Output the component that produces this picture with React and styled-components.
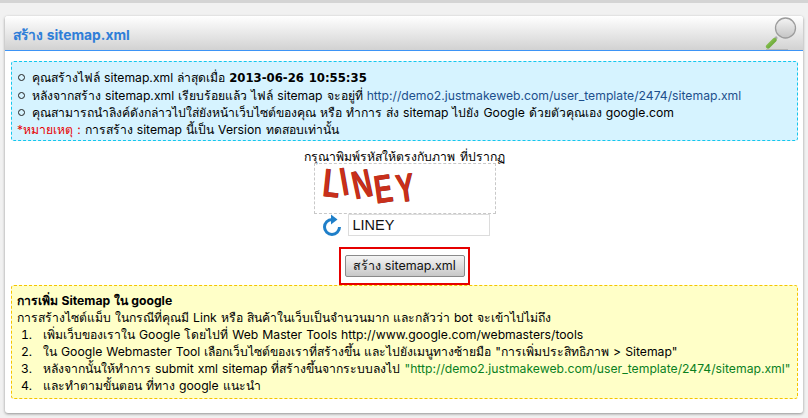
import styled, { createGlobalStyle } from "styled-components";

const GlobalStyle = createGlobalStyle`
  html, body {
    margin: 0;
    padding: 0;
    background: #f1f1f1;
  }
  body {
    font-family: Inter, "Noto Sans", "Liberation Sans", sans-serif;
    font-size: 12.2px;
    word-spacing: 0.6px;
    color: #000;
  }
`;

const captchaLetters = [
  { char: "L", tilt: 6, drop: 0, width: 17 },
  { char: "I", tilt: -10, drop: 0, width: 12 },
  { char: "N", tilt: -12, drop: 4, width: 22 },
  { char: "E", tilt: -8, drop: 8, width: 22 },
  { char: "Y", tilt: -8, drop: 7, width: 21 },
];

const MagnifierIcon = () => (
  <svg width="33" height="33" viewBox="0 0 33 33">
    <defs>
      <linearGradient id="glass" x1="0" y1="0" x2="0" y2="1">
        <stop offset="0" stopColor="#f4f4f4" />
        <stop offset="1" stopColor="#c4c4c4" />
      </linearGradient>
      <linearGradient id="handle" x1="0" y1="0" x2="1" y2="1">
        <stop offset="0" stopColor="#a6d86a" />
        <stop offset="1" stopColor="#4c8f1e" />
      </linearGradient>
    </defs>
    <path d="M2 32.500h22" stroke="#8a8a8a" strokeWidth="1" opacity="0.4" />
    <path d="M13 20l-2 2" stroke="#aaa" strokeWidth="2.500" />
    <path d="M2.500 31c-1-1-1-2 0-3l6.500-6.500c1-1 2-1 3 0s1 2 0 3L5.500 31c-1 1-2 1-3 0z" fill="url(#handle)" />
    <circle cx="21.500" cy="11" r="10" fill="url(#glass)" stroke="#9c9c9c" strokeWidth="1.300" />
  </svg>
);

const RefreshIcon = () => (
  <svg width="20" height="22" viewBox="0 0 20 22">
    <path d="M10 5.500a7.500 7.500 0 1 0 7.500 7.500" fill="none" stroke="#1f7fc9" strokeWidth="3" />
    <path d="M9 0.500l6.500 5-6.500 5z" fill="#1f7fc9" />
  </svg>
);

const App = () => {
  return (
    <>
      <GlobalStyle />
      <Page>
        <Panel>
          <PanelHeader>
            <PanelTitle>สร้าง sitemap.xml</PanelTitle>
            <MagnifierIcon />
          </PanelHeader>
          <PanelBody>
            <InfoBox>
              <InfoList>
                <li>
                  คุณสร้างไฟล์ sitemap.xml ล่าสุดเมื่อ <StampDate>2013-06-26 10:55:35</StampDate>
                </li>
                <li>
                  หลังจากสร้าง sitemap.xml เรียบร้อยแล้ว ไฟล์ sitemap จะอยู่ที่{" "}
                  <SiteLink>http://demo2.justmakeweb.com/user_template/2474/sitemap.xml</SiteLink>
                </li>
                <li>
                  คุณสามารถนำลิงค์ดังกล่าวไปใส่ยังหน้าเว็บไซต์ของคุณ หรือ ทำการ ส่ง sitemap ไปยัง Google
                  ด้วยตัวคุณเอง google.com
                </li>
              </InfoList>
              <div>
                <RedNote>*หมายเหตุ :</RedNote> การสร้าง sitemap นี้เป็น Version ทดสอบเท่านั้น
              </div>
            </InfoBox>

            <CaptchaForm>
              <CaptchaLabel>กรุณาพิมพ์รหัสให้ตรงกับภาพ ที่ปรากฏ</CaptchaLabel>
              <CaptchaImage>
                <CaptchaWord>
                  {captchaLetters.map((l) => (
                    <CaptchaLetter key={l.char} $tilt={l.tilt} $drop={l.drop} $width={l.width}>
                      {l.char}
                    </CaptchaLetter>
                  ))}
                </CaptchaWord>
              </CaptchaImage>
              <CaptchaRow>
                <RefreshIcon />
                <CaptchaInput defaultValue="LINEY" />
              </CaptchaRow>
              <ButtonFrame>
                <SubmitButton>สร้าง sitemap.xml</SubmitButton>
              </ButtonFrame>
            </CaptchaForm>

            <HelpBox>
              <b>การเพิ่ม Sitemap ใน google</b>
              <div>การสร้างไซต์แม็บ ในกรณีที่คุณมี Link หรือ สินค้าในเว็บเป็นจำนวนมาก และกลัวว่า bot จะเข้าไปไม่ถึง</div>
              <HelpSteps>
                <li>เพิ่มเว็บของเราใน Google โดยไปที่ Web Master Tools http://www.google.com/webmasters/tools</li>
                <li>ใน Google Webmaster Tool เลือกเว็บไซต์ของเราที่สร้างขึ้น และไปยังเมนูทางซ้ายมือ "การเพิ่มประสิทธิภาพ &gt; Sitemap"</li>
                <li>
                  หลังจากนั้นให้ทำการ submit xml sitemap ที่สร้างขึ้นจากระบบลงไป{" "}
                  <GreenLink>"http://demo2.justmakeweb.com/user_template/2474/sitemap.xml"</GreenLink>
                </li>
                <li>และทำตามขั้นตอน ที่ทาง google แนะนำ</li>
              </HelpSteps>
            </HelpBox>
          </PanelBody>
        </Panel>
      </Page>
    </>
  );
};

const Page = styled.div`
  width: 808px;
  height: 418px;
  box-sizing: border-box;
  padding: 13px 5px 5px;
  overflow: hidden;
  border-top: 3px solid #d4d4d4;
`;

const Panel = styled.div`
  height: 397px;
  box-sizing: border-box;
  background: #fff;
  border-radius: 3px;
  box-shadow: 0 1px 3px rgba(0, 0, 0, 0.4);
`;

const PanelHeader = styled.div`
  height: 34px;
  padding: 0 6px 0 8px;
  display: flex;
  align-items: flex-end;
  justify-content: space-between;
  background: linear-gradient(#ffffff, #d2d2d2);
  border-bottom: 1px solid #3d94f6;
  border-radius: 3px 3px 0 0;
`;

const PanelTitle = styled.h1`
  margin: 0 0 5px;
  font-size: 13.8px;
  line-height: 19px;
  font-weight: bold;
  color: #2f7ed8;
`;

const PanelBody = styled.div`
  padding: 10px 5px 0 6px;
`;

const InfoBox = styled.div`
  height: 80px;
  box-sizing: border-box;
  padding: 7px 5px;
  line-height: 17px;
  background: #d6f3ff;
  border: 1px dashed #14c7ee;
  border-radius: 3px;
`;

const InfoList = styled.ul`
  margin: 0;
  padding: 0 0 0 12px;
  list-style: none;

  li::before {
    content: "";
    display: inline-block;
    width: 5px;
    height: 5px;
    margin: 0 7px 1px -11px;
    border: 1px solid #222;
    border-radius: 50%;
  }
`;

const StampDate = styled.b`
  font-family: "DejaVu Sans", sans-serif;
  font-size: 11.7px;
`;

const SiteLink = styled.span`
  color: #1c4f8c;
`;

const RedNote = styled.span`
  color: #e60000;
`;

const CaptchaForm = styled.div`
  height: 144px;
  display: flex;
  flex-direction: column;
  align-items: center;
`;

const CaptchaLabel = styled.div`
  margin-top: 9px;
  line-height: 13px;
`;

const CaptchaImage = styled.div`
  width: 180px;
  height: 50px;
  margin-left: 1px;
  border: 1px dashed #c8c8c8;
`;

const CaptchaWord = styled.div`
  display: flex;
  margin-left: 8px;
`;

const CaptchaLetter = styled.span`
  display: block;
  width: ${(p) => p.$width}px;
  font-family: "Liberation Sans", sans-serif;
  font-weight: bold;
  font-size: 40px;
  line-height: 36px;
  color: #c8301c;
  text-shadow: 1px 0 0 #7a1608;
  transform-origin: left center;
  transform: translateY(${(p) => p.$drop}px) rotate(${(p) => p.$tilt}deg) scaleX(0.68);
`;

const CaptchaRow = styled.div`
  width: 168px;
  margin-left: 2px;
  display: flex;
  align-items: center;
  justify-content: space-between;
`;

const CaptchaInput = styled.input`
  width: 142px;
  height: 22px;
  box-sizing: border-box;
  padding: 0 4px;
  border: 1px solid #dcdcdc;
  font-family: "Liberation Sans", sans-serif;
  font-size: 14.5px;
  color: #111;
`;

const ButtonFrame = styled.div`
  position: relative;
  margin-top: 11px;
  width: 131px;
  height: 39px;
  box-sizing: border-box;
  border: 2px solid #e60000;
  display: flex;
  align-items: center;
  justify-content: center;
`;

const SubmitButton = styled.button`
  width: 120px;
  height: 22px;
  padding: 0;
  border: 1px solid #8a8a8a;
  border-radius: 2px;
  background: linear-gradient(#f4f4f4, #c8c8c8);
  font-family: inherit;
  font-size: 12.5px;
  color: #111;
`;

const HelpBox = styled.div`
  height: 114px;
  box-sizing: border-box;
  padding: 6px 5px;
  line-height: 17px;
  background: #ffffc8;
  border: 1px dashed #f5c400;
  border-radius: 3px;
`;

const HelpSteps = styled.ol`
  margin: 0;
  padding: 0 0 0 19px;

  li {
    padding-left: 7px;
    white-space: nowrap;
  }
`;

const GreenLink = styled.span`
  color: #0a7f1e;
`;

export default App;
